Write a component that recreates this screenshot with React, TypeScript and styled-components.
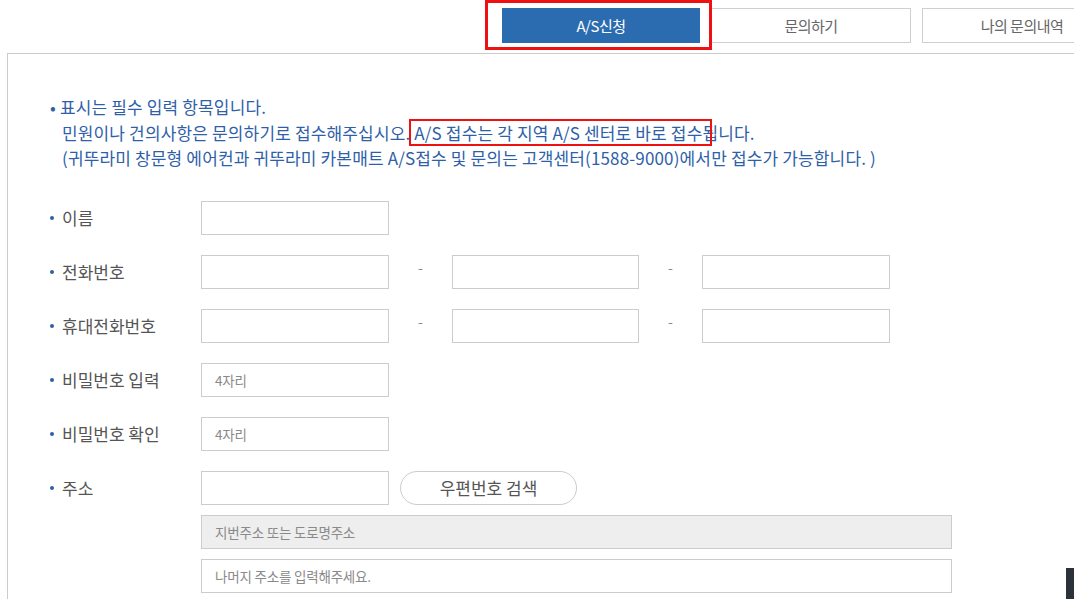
import styled, { createGlobalStyle } from "styled-components";

const GlobalStyle = createGlobalStyle`
  html, body {
    margin: 0;
    padding: 0;
    background: #ffffff;
    font-family: "Noto Sans CJK KR", "Noto Sans", sans-serif;
  }
  * { box-sizing: border-box; }
`;

const Page = styled.div`
  position: relative;
  width: 1074px;
  height: 599px;
  overflow: hidden;
`;

const TabBar = styled.div`
  display: flex;
  gap: 11px;
  height: 53px;
  padding: 8px 0 0 502px;
`;

const Tab = styled.div<{ $active?: boolean }>`
  flex: none;
  width: ${({ $active }) => ($active ? "198px" : "200px")};
  height: 35px;
  display: flex;
  align-items: center;
  justify-content: center;
  font-size: 15px;
  letter-spacing: -0.5px;
  color: ${({ $active }) => ($active ? "#ffffff" : "#666666")};
  background: ${({ $active }) => ($active ? "#2b6cb0" : "#ffffff")};
  border: 1px solid ${({ $active }) => ($active ? "#2b6cb0" : "#cfcfcf")};
`;

const Panel = styled.div`
  margin-left: 7px;
  width: 1100px;
  min-height: 560px;
  border: 1px solid #cccccc;
  padding: 40px 0 0 42px;
`;

const Notice = styled.p`
  margin: 0;
  padding-left: 12px;
  text-indent: -12px;
  font-size: 17px;
  line-height: 25.5px;
  letter-spacing: 0.15px;
  color: #2f5fa8;
`;

const Form = styled.div`
  margin-top: 30px;
  display: flex;
  flex-direction: column;
  gap: 20px;
`;

const Row = styled.div`
  display: flex;
  align-items: flex-start;
`;

const Label = styled.div`
  flex: none;
  width: 151px;
  height: 34px;
  display: flex;
  align-items: center;
  gap: 8px;
  font-size: 17px;
  color: #555555;

  &::before {
    content: "";
    width: 4px;
    height: 4px;
    border-radius: 50%;
    background: #2f5fa8;
  }
`;

const Field = styled.div`
  display: flex;
  flex-direction: column;
  gap: 10px;
`;

const Line = styled.div`
  display: flex;
  align-items: center;
`;

const Input = styled.div<{ $width?: number; $disabled?: boolean }>`
  width: ${({ $width }) => $width ?? 188}px;
  height: 34px;
  border: 1px solid #cccccc;
  background: ${({ $disabled }) => ($disabled ? "#eeeeee" : "#ffffff")};
  padding-left: 13px;
  display: flex;
  align-items: center;
  font-size: 13.5px;
  letter-spacing: -0.2px;
  color: #8a8a8a;
`;

const Dash = styled.span`
  width: 63px;
  text-align: center;
  font-size: 14px;
  color: #888888;
  margin-top: -10px;
`;

const PillButton = styled.div`
  margin-left: 11px;
  width: 177px;
  height: 34px;
  border: 1px solid #cccccc;
  border-radius: 17px;
  display: flex;
  align-items: center;
  justify-content: center;
  font-size: 17px;
  color: #555555;
`;

const Marker = styled.div<{ $x: number; $y: number; $w: number; $h: number; $b: number }>`
  position: absolute;
  left: ${({ $x }) => $x}px;
  top: ${({ $y }) => $y}px;
  width: ${({ $w }) => $w}px;
  height: ${({ $h }) => $h}px;
  border: ${({ $b }) => $b}px solid #ee1111;
  pointer-events: none;
`;

const TopButton = styled.div`
  position: absolute;
  right: 0;
  bottom: 0;
  width: 8px;
  height: 31px;
  background: #2c323c;
`;

const PhoneLine = () => (
  <Line>
    <Input />
    <Dash>-</Dash>
    <Input $width={187} />
    <Dash>-</Dash>
    <Input $width={188} />
  </Line>
);

export default function App() {
  return (
    <Page>
      <GlobalStyle />
      <TabBar>
        <Tab $active>A/S신청</Tab>
        <Tab>문의하기</Tab>
        <Tab>나의 문의내역</Tab>
      </TabBar>
      <Panel>
        <Notice>
          • 표시는 필수 입력 항목입니다.
          <br />
          민원이나 건의사항은 문의하기로 접수해주십시오. A/S 접수는 각 지역 A/S 센터로 바로 접수됩니다.
          <br />
          (귀뚜라미 창문형 에어컨과 귀뚜라미 카본매트 A/S접수 및 문의는 고객센터(1588-9000)에서만 접수가 가능합니다. )
        </Notice>
        <Form>
          <Row>
            <Label>이름</Label>
            <Input />
          </Row>
          <Row>
            <Label>전화번호</Label>
            <PhoneLine />
          </Row>
          <Row>
            <Label>휴대전화번호</Label>
            <PhoneLine />
          </Row>
          <Row>
            <Label>비밀번호 입력</Label>
            <Input>4자리</Input>
          </Row>
          <Row>
            <Label>비밀번호 확인</Label>
            <Input>4자리</Input>
          </Row>
          <Row>
            <Label>주소</Label>
            <Field>
              <Line>
                <Input />
                <PillButton>우편번호 검색</PillButton>
              </Line>
              <Input $width={751} $disabled>
                지번주소 또는 도로명주소
              </Input>
              <Input $width={751}>나머지 주소를 입력해주세요.</Input>
            </Field>
          </Row>
        </Form>
      </Panel>
      <Marker $x={485} $y={0} $w={227} $h={50} $b={3} />
      <Marker $x={409} $y={119} $w={303} $h={27} $b={2} />
      <TopButton />
    </Page>
  );
}
